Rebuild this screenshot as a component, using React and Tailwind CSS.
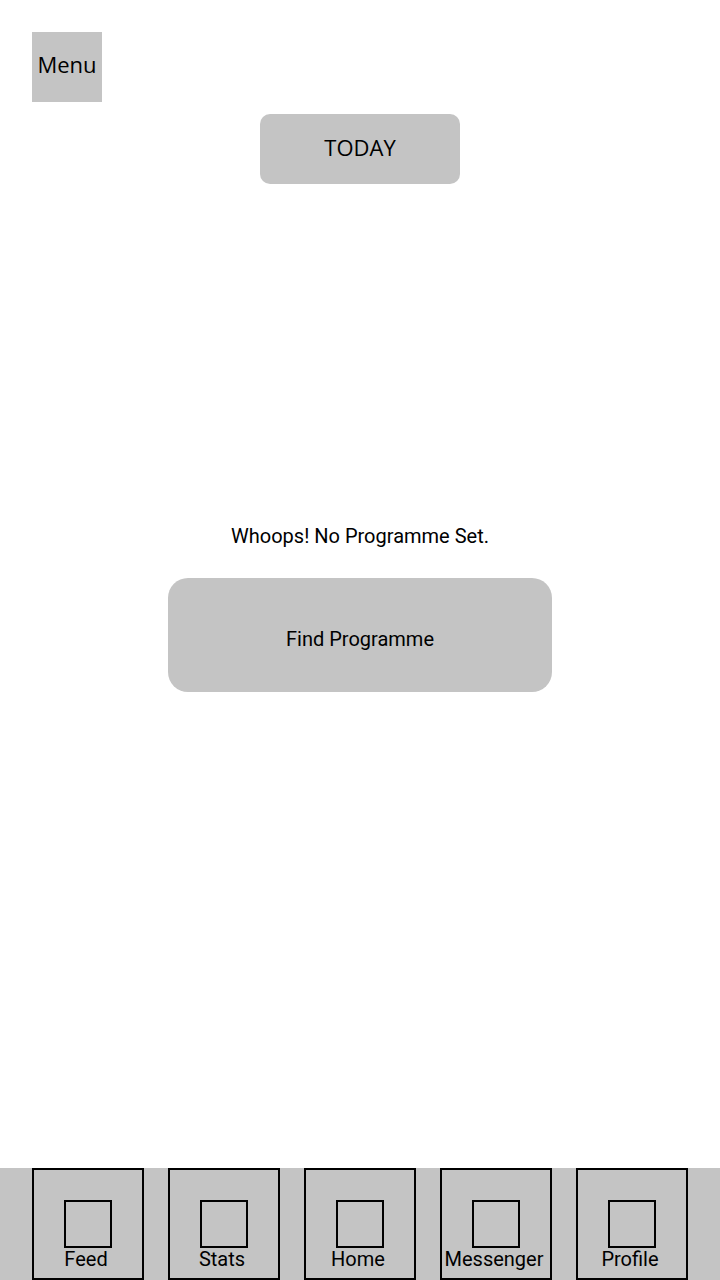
const tabs = ['Feed', 'Stats', 'Home', 'Messenger', 'Profile'];

export default function App() {
  return (
    <div className="h-[1280px] w-[720px] flex flex-col bg-white text-black font-['Roboto',sans-serif]">
      <main className="flex-1 flex flex-col">
        <div className="pt-8 pl-8">
          <button className="w-[70px] h-[70px] bg-[#c4c4c4] flex items-center justify-center pb-[6px] text-[22px] font-['Open_Sans',sans-serif]">
            Menu
          </button>
        </div>
        <div className="flex justify-center mt-3">
          <button className="w-[200px] h-[70px] bg-[#c4c4c4] rounded-[10px] flex items-center justify-center pb-1 text-[22px] font-['Open_Sans',sans-serif]">
            TODAY
          </button>
        </div>
        <div className="flex flex-col items-center mt-[340px]">
          <p className="text-[20px] leading-[24px]">Whoops! No Programme Set.</p>
          <button className="mt-[30px] w-[384px] h-[114px] bg-[#c4c4c4] rounded-[20px] flex items-center justify-center pt-[8px] text-[20px]">
            Find Programme
          </button>
        </div>
      </main>
      <nav className="h-[112px] bg-[#c4c4c4] flex gap-6 pl-8">
        {tabs.map(t => (
          <div
            key={t}
            className="w-[112px] h-[112px] border-2 border-black flex flex-col items-center pt-[30px]"
          >
            <div className="w-12 h-12 border-2 border-black" />
            <span className="text-[20px] leading-[22px] pr-1">{t}</span>
          </div>
        ))}
      </nav>
    </div>
  );
}
